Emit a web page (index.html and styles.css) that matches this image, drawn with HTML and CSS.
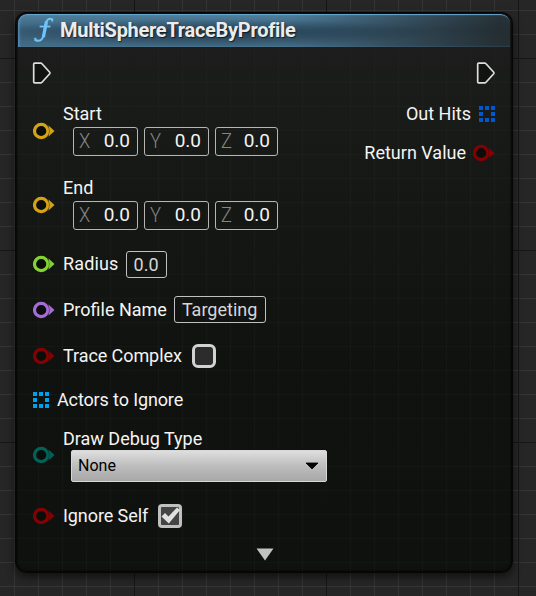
FILE: index.html
```html
<!DOCTYPE html>
<html lang="en">
<head>
<meta charset="utf-8">
<title>MultiSphereTraceByProfile</title>
<link rel="stylesheet" href="styles.css">
</head>
<body>
<svg class="defs" width="0" height="0">
  <symbol id="exec" viewBox="0 0 20 22"><path d="M2.600 1.200H8.700Q9.500 1.200 10 1.800L17.700 10.200Q18.300 11 17.700 11.800L10 20.200Q9.500 20.800 8.700 20.800H2.600Q1.700 20.800 1.700 19.900V2.100Q1.700 1.200 2.600 1.200Z" fill="#111311" stroke="#ddd" stroke-width="1.700"/></symbol>
  <symbol id="pin" viewBox="0 0 22 18"><path d="M15.500 3.500L21.500 9L15.500 14.500Z" fill="currentColor"/><circle cx="8.200" cy="9" r="6.700" fill="#0b0d0b" stroke="currentColor" stroke-width="3.200"/><path d="M14.800 4Q18 9 14.800 14" fill="none" stroke="#111311" stroke-opacity=".45" stroke-width=".8"/></symbol>
  <symbol id="array" viewBox="0 0 16 16"><path d="M0 0h4v4H0zM6 0h4v4H6zM12 0h4v4h-4zM0 6h4v4H0zM12 6h4v4h-4zM0 12h4v4H0zM6 12h4v4H6zM12 12h4v4h-4z" fill="currentColor"/></symbol>
</svg>
<main class="node">
  <header class="header">
    <svg class="fn" width="22" height="26" viewBox="0 0 22 26"><g fill="none" stroke="#6fc3fb" stroke-linecap="square"><path d="M19.200 3.600V2.200C15.500 .8 13.600 3 12.800 7L10.400 18.500C9.500 23 7 25 2.300 23V21.800" stroke-width="2"/><path d="M13.200 6L10.700 18.500" stroke-width="3.200"/><path d="M7.500 9.500H16.500" stroke-width="1.800"/></g></svg>
    <h1 class="title">MultiSphereTraceByProfile</h1>
  </header>
  <div class="exec-row">
    <svg width="20" height="22"><use href="#exec"/></svg>
    <svg width="20" height="22"><use href="#exec"/></svg>
  </div>
  <div class="pins">
    <section class="inputs">
      <div class="row vector">
        <svg class="pin gold" width="22" height="18"><use href="#pin"/></svg>
        <div class="stack"><span class="label start">Start</span>
          <div class="fields"><span class="field"><i>X</i>0.0</span><span class="field"><i>Y</i>0.0</span><span class="field last"><i>Z</i>0.0</span></div>
        </div>
      </div>
      <div class="row vector second">
        <svg class="pin gold" width="22" height="18"><use href="#pin"/></svg>
        <div class="stack"><span class="label end">End</span>
          <div class="fields"><span class="field"><i>X</i>0.0</span><span class="field"><i>Y</i>0.0</span><span class="field last"><i>Z</i>0.0</span></div>
        </div>
      </div>
      <div class="row radius"><svg class="pin green" width="22" height="18"><use href="#pin"/></svg><span class="label">Radius</span><span class="value number">0.0</span></div>
      <div class="row profile"><svg class="pin purple" width="22" height="18"><use href="#pin"/></svg><span class="label">Profile Name</span><span class="value text">Targeting</span></div>
      <div class="row trace"><svg class="pin red" width="22" height="18"><use href="#pin"/></svg><span class="label">Trace Complex</span><span class="check"></span></div>
      <div class="row actors"><svg class="array cyan" width="16" height="16"><use href="#array"/></svg><span class="label">Actors to Ignore</span></div>
      <div class="row debug">
        <svg class="pin teal" width="22" height="18"><use href="#pin"/></svg>
        <div class="stack"><span class="label">Draw Debug Type</span>
          <div class="select"><span>None</span><svg width="14" height="8" viewBox="0 0 14 8"><path d="M1 1H13L7 7Z" fill="#000" stroke="#000" stroke-width=".8"/></svg></div>
        </div>
      </div>
      <div class="row ignore"><svg class="pin red" width="22" height="18"><use href="#pin"/></svg><span class="label">Ignore Self</span><span class="check on"><svg width="20" height="20" viewBox="0 0 20 20"><path d="M1.500 10.500L5 7L8.500 10.500L17 1.500L20 4L8.800 17.500Z" fill="#e0e0e0"/></svg></span></div>
    </section>
    <section class="outputs">
      <div class="out hits"><span class="label">Out Hits</span><svg class="blue" width="16" height="16"><use href="#array"/></svg></div>
      <div class="out result"><span class="label">Return Value</span><svg class="red" width="22" height="18"><use href="#pin"/></svg></div>
    </section>
  </div>
  <footer class="expand"><svg width="18" height="13" viewBox="0 0 18 13"><path d="M.5 .5H17.500L9 12.500Z" fill="#c2c2c2"/></svg></footer>
</main>
</body>
</html>
```

FILE: styles.css
```css
* { box-sizing: border-box; }
body {
  margin: 0;
  width: 536px;
  height: 596px;
  padding: 12px 0 0 15px;
  overflow: hidden;
  font: 18px/22px Roboto, "Liberation Sans", sans-serif;
  color: #f4f4f4;
  background:
    linear-gradient(90deg, #161616 1px, transparent 1px) 134px 0 / 192px 192px,
    linear-gradient(#161616 1px, transparent 1px) 0 58px / 192px 192px,
    linear-gradient(90deg, #353535 1px, transparent 1px) 14px 0 / 24px 24px,
    linear-gradient(#353535 1px, transparent 1px) 0 10px / 24px 24px,
    #262626;
}
.defs { position: absolute; }
svg { display: block; flex: none; }
.node {
  width: 498px;
  height: 561px;
  border: 1px solid #050605;
  border-radius: 11px;
  background:
    linear-gradient(90deg, rgba(0,0,0,.16) 1px, transparent 1px) 118px 0 / 192px 192px,
    linear-gradient(rgba(0,0,0,.16) 1px, transparent 1px) 0 45px / 192px 192px,
    linear-gradient(90deg, rgba(255,255,255,.018) 1px, transparent 1px) 22px 0 / 24px 24px,
    linear-gradient(rgba(255,255,255,.018) 1px, transparent 1px) 0 21px / 24px 24px,
    linear-gradient(#1d1d1d 35px, #1a1c19 70px, #161815 170px, #10120f 350px, #0f110e);
  box-shadow: inset 0 0 2px 1px #050605, 0 4px 9px rgba(0,0,0,.55);
}
.header {
  display: flex;
  align-items: center;
  height: 33px;
  margin: 1px 2px 0;
  padding: 0 0 2px 15px;
  border-radius: 9px 9px 0 0;
  background:
    radial-gradient(ellipse 230px 14px at 38% 57%, rgba(20,38,51,.65), transparent),
    linear-gradient(90deg, transparent 55%, rgba(30,32,32,.8) 98%),
    linear-gradient(#50809f, #3a617b 48%, #446b84);
  box-shadow: inset 0 2px 1px -1px #69a8d0, inset 2px 0 3px -1px #5b98c1;
}
.title {
  margin: 0 0 0 5px;
  font-size: 20px;
  line-height: 24px;
  font-weight: 700;
  letter-spacing: -.29px;
  color: #ececec;
  text-shadow: 1px 1px 1px rgba(0,0,0,.6);
}
.exec-row {
  display: flex;
  align-items: center;
  justify-content: space-between;
  height: 52px;
  padding: 0 16px 0 16px;
}
.pins { display: flex; justify-content: space-between; height: 440px; }
.row { display: flex; align-items: center; padding-left: 17px; }
.pin { margin-right: 8px; }
.label { display: block; white-space: nowrap; }
.vector { height: 64px; }
.second { margin-top: 10px; }
.vector .stack { padding-bottom: 4px; }
.vector .pin { margin-bottom: 1px; }
.fields { display: flex; gap: 6px; margin: 2px 0 0 10px; }
.field {
  display: flex;
  align-items: center;
  justify-content: space-between;
  width: 65px;
  height: 29px;
  padding: 0 7px 0 5px;
  border: 1px solid #b4b5b4;
  border-radius: 3px;
  font-size: 19px;
}
.field.last { width: 63px; }
.field i { font-style: normal; font-size: 20px; font-weight: 300; color: #858585; transform: scaleX(.92); transform-origin: left; }
.radius { height: 54px; }
.radius .label { letter-spacing: .15px; }
.profile { height: 38px; padding-bottom: 1px; }
.trace { height: 54px; }
.trace .label, .ignore .label { letter-spacing: -.08px; }
.actors { height: 34px; padding-bottom: 1px; }
.actors .label { letter-spacing: -.13px; }
.debug { height: 76px; }
.ignore { height: 46px; }
.value {
  height: 27px;
  margin-left: 7px;
  padding: 0 7px;
  line-height: 25px;
  border: 1px solid #c0c1c0;
  border-radius: 3px;
  color: #d6d6d6;
}
.value.text { padding-right: 8px; }
.check {
  width: 24px;
  height: 24px;
  margin-left: 10px;
  border: 3px solid #d2d2d2;
  border-radius: 6px;
  background: #2c2c2c;
}
.check.on { border-color: #c0c0c0; border-radius: 4px; background: #444; }
.check.on svg { margin: -1px; }
.array { margin-right: 8px; }
.select {
  display: flex;
  align-items: center;
  justify-content: space-between;
  width: 256px;
  height: 32px;
  margin-left: 8px;
  padding: 0 7px 0 6px;
  border: 1px solid #d8d8d8;
  border-radius: 2px;
  color: #000;
  font-size: 16px;
  background: linear-gradient(#dedede, #bdbdbd 50%, #a8a8a8);
}
.out { display: flex; align-items: center; justify-content: flex-end; }
.outputs { padding-right: 17px; }
.hits { height: 29px; gap: 8px; }
.result { height: 49px; gap: 7px; }
.expand { display: flex; justify-content: center; align-items: center; height: 30px; padding-left: 2px; }
.gold { color: #d3a315; }
.green { color: #83d334; }
.purple { color: #a56bd7; }
.red { color: #850000; }
.cyan { color: #00a0f0; }
.teal { color: #006358; }
.blue { color: #0058d0; }
```
